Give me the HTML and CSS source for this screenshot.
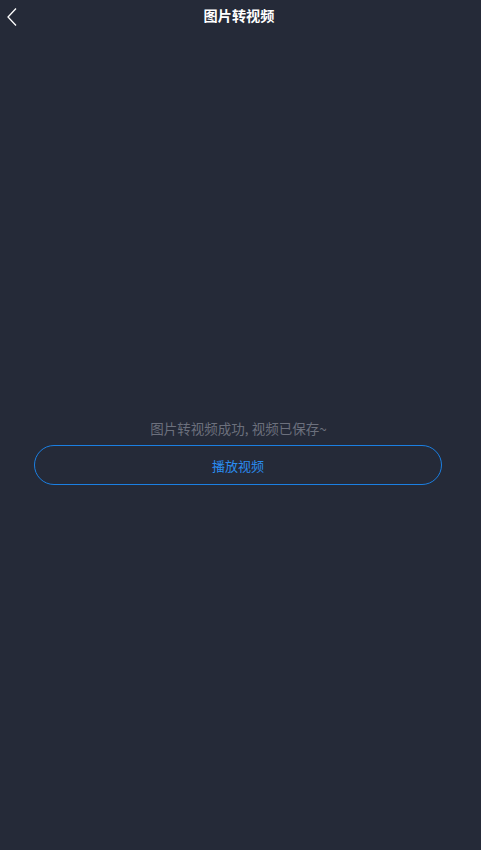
FILE: index.html
```html
<!DOCTYPE html>
<html lang="zh">
<head>
<meta charset="utf-8">
<link rel="stylesheet" href="styles.css">
</head>
<body>
<div class="page">
  <header class="nav">
    <span class="back">
      <svg width="12" height="20" viewBox="0 0 12 20"><path d="M10 1.5 L2 10 L10 18.5" fill="none" stroke="#ffffff" stroke-width="1.3"/></svg>
    </span>
    <h1 class="title">图片转视频</h1>
  </header>
  <main class="content">
    <p class="msg">图片转视频成功, 视频已保存~</p>
    <button class="play">播放视频</button>
  </main>
</div>
</body>
</html>
```
FILE: styles.css
```css
html, body {
  margin: 0;
  padding: 0;
  background: #252a38;
}
body {
  font-family: "Noto Sans CJK SC", "Noto Sans", sans-serif;
}
.page {
  width: 481px;
  height: 850px;
  display: flex;
  flex-direction: column;
}
.nav {
  height: 33px;
  position: relative;
  display: flex;
  align-items: center;
  justify-content: center;
}
.back {
  position: absolute;
  left: 6px;
  top: 7px;
  display: flex;
}
.title {
  margin: 0;
  font-size: 14.2px;
  font-weight: bold;
  color: #ffffff;
  line-height: 30px;
  margin-left: -3px;
  margin-bottom: 3px;
}
.content {
  display: flex;
  flex-direction: column;
  align-items: center;
  padding-top: 385px;
}
.msg {
  margin: 0;
  font-size: 13.5px;
  line-height: 20px;
  color: #6c707d;
  margin-left: -4px;
}
.play {
  margin-top: 7px;
  width: 408px;
  height: 40px;
  border: 1.3px solid #1b7fe2;
  border-radius: 20px;
  background: transparent;
  color: #2a8cf0;
  font-family: "Noto Sans CJK SC", "Noto Sans", sans-serif;
  font-size: 13px;
  margin-left: -5px;
  padding: 0;
}
```
